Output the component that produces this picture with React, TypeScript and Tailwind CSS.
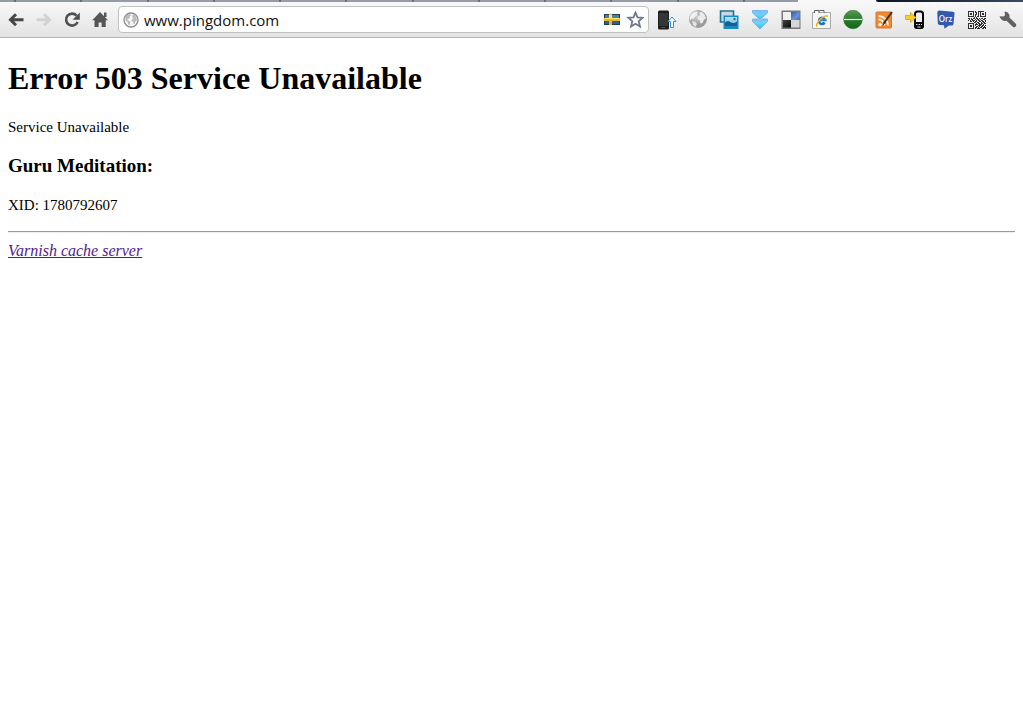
import type { ReactNode } from "react";

const TABS = Array.from({ length: 11 }, (_, i) => i);

/* 18x18 modules, one string per row */
const QR_ROWS = [
  "111111010011111100",
  "100001011010100001",
  "101101001010101101",
  "101101011010101101",
  "100001010010100001",
  "111111010110111111",
  "000000101000000000",
  "110101101101011011",
  "010110010110100110",
  "101011101011011001",
  "001101011001101101",
  "000000110110010110",
  "111111001011011011",
  "100001011101110100",
  "101101010011101101",
  "101101001101011010",
  "100001011010110111",
  "111111010111001101",
];

function Svg({ children }: { children: ReactNode }) {
  return (
    <svg width="20" height="20" viewBox="0 0 20 20" aria-hidden="true" className="shrink-0">
      {children}
    </svg>
  );
}

function BackIcon() {
  return (
    <Svg>
      <path d="M10 4.200 4.500 9.700l5.500 5.500M5 9.700h12.500" fill="none" stroke="#474747" strokeWidth="3" />
    </Svg>
  );
}

function ForwardIcon() {
  return (
    <Svg>
      <path d="M10 4.200 15.500 9.700 10 15.200M15 9.700H2.500" fill="none" stroke="#d2d2d2" strokeWidth="3" />
    </Svg>
  );
}

function ReloadIcon() {
  return (
    <Svg>
      <path d="M14.600 5.600A6 6 0 1 0 15.600 12" fill="none" stroke="#505050" strokeWidth="2.600" />
      <path d="M17.800 2.500v7.200h-7.200z" fill="#505050" />
    </Svg>
  );
}

function HomeIcon() {
  return (
    <Svg>
      <path d="M14 2.500h2.500V7H14z" fill="#555" />
      <path d="M10 2 2.200 10.300h2.300V17H8.600v-4.500h3V17h4.100v-6.700h2.300z" fill="#555" />
    </Svg>
  );
}

function SiteGlobeIcon() {
  return (
    <svg width="16" height="16" viewBox="0 0 16 16" aria-hidden="true" className="shrink-0">
      <circle cx="8" cy="8" r="7" fill="#f7f7f7" stroke="#8b8b8b" strokeWidth="1.300" />
      <path d="m2.500 4.700 2-2 2.500-.5 1 1.300-1.500 1.200.5 1.300-2 .8-.8 1.300 2 .8 1.300 1.200-.8 1.500.2 2-1.700-1.200-.7-2.600-2-1.600z" fill="#b9b9b9" />
      <path d="m9.500 2.300 2.700 1.200 1.400 2.200.2 3-1.500 1-.5 2-1.300.6-.3-2.200-1.700-.8.3-1.800 1.500-.9-1.100-1.300z" fill="#bdbdbd" />
    </svg>
  );
}

function SwedenFlag() {
  return (
    <svg width="16" height="11" viewBox="0 0 16 11" aria-hidden="true" className="shrink-0">
      <path d="M0 0h16v11H0z" fill="#1d3c60" />
      <path d="M1 1h14v9H1z" fill="#2f6090" />
      <path d="M1 1h14v3H1z" fill="#4b7fab" />
      <path d="M5 0h3v11H5zM0 4h16v3H0z" fill="#e5b92c" />
      <path d="M5 1h3v3H5zM1 4h14v1H1z" fill="#ffe36a" />
    </svg>
  );
}

function StarIcon() {
  return (
    <svg width="18" height="18" viewBox="0 0 18 18" aria-hidden="true" className="shrink-0">
      <path
        d="m9.500 1.500 2 4.900 5.200.4-4 3.500 1.300 5.200-4.500-2.800L5 15.500l1.300-5.200-4-3.500 5.200-.4z"
        fill="#fff"
        stroke="#6f7890"
        strokeWidth="1.800"
      />
    </svg>
  );
}

function PhoneUploadIcon() {
  return (
    <Svg>
      <rect x="1" y="0.500" width="11" height="19" rx="1.500" fill="#1d1d1d" />
      <path d="M2 3h9v13H2z" fill="#343638" />
      <path d="M4.500 17.500h4" stroke="#555" />
      <path d="m15 7 4 4.500h-2.500v6h-3v-6H11z" fill="#fff" stroke="#1c94e8" strokeLinejoin="round" />
    </Svg>
  );
}

function GreyGlobeIcon() {
  return (
    <Svg>
      <defs>
        <radialGradient id="globe" cx="40%" cy="35%">
          <stop offset="0" stopColor="#d0d0d0" />
          <stop offset="1" stopColor="#9b9b9b" />
        </radialGradient>
      </defs>
      <circle cx="10" cy="9" r="9" fill="url(#globe)" />
      <path d="m2.500 5 2.500-2.500 3-1 2 .5-1.500 2 1 1.500-2.500 1L5.500 9l-2-.5-1 2-1-2z" fill="#f0f0f0" />
      <path d="m11 2.500 3-.5 2.500 2.500 1.500 4-2 1-1.500 3.500-2 .5-1-3.500-2-.5.500-3 2.500-1.500z" fill="#ebebeb" />
      <path d="m4 11 3.500 1 1.500 2-1.500 3L5 15z" fill="#e4e4e4" />
    </Svg>
  );
}

function PicturesIcon() {
  return (
    <Svg>
      <defs>
        <linearGradient id="photo" x1="0" y1="0" x2="0" y2="1">
          <stop offset="0" stopColor="#b7e2f5" />
          <stop offset="1" stopColor="#60b8e6" />
        </linearGradient>
      </defs>
      <path d="M1.500 1h13v11h-13z" fill="#c9d9e0" stroke="#286d92" strokeWidth="1.600" />
      <path d="M4.500 5.500h15v13.500h-15z" fill="#168ace" />
      <path d="M6 7h12v9.500H6z" fill="url(#photo)" />
      <path d="M6 12.500q3-3 6 0 3 1.500 6-1v5H6z" fill="#14618f" />
      <circle cx="15.500" cy="9" r="1.200" fill="#24719b" />
    </Svg>
  );
}

function DoubleDownIcon() {
  return (
    <Svg>
      <defs>
        <linearGradient id="chevron" x1="0" y1="0" x2="0" y2="1">
          <stop offset="0" stopColor="#8bb8f2" />
          <stop offset=".4" stopColor="#6bd3fa" />
          <stop offset="1" stopColor="#18c9f7" />
        </linearGradient>
      </defs>
      <path d="M2.500.5h15v2.500L10 9.500 2.500 3z" fill="url(#chevron)" stroke="#6cabe8" strokeWidth=".8" />
      <path d="M2.500 9h5l2.500 1.500L12.500 9h5v2.500l-7.500 7.500-7.500-7.500z" fill="url(#chevron)" stroke="#6cabe8" strokeWidth=".8" />
    </Svg>
  );
}

function DeliciousIcon() {
  return (
    <Svg>
      <defs>
        <linearGradient id="blueTile" x1="0" y1="0" x2="1" y2="1">
          <stop offset="0" stopColor="#2c5ca8" />
          <stop offset=".6" stopColor="#6b94d3" />
          <stop offset="1" stopColor="#3f6ebc" />
        </linearGradient>
        <linearGradient id="blackTile" x1="0" y1="0" x2="1" y2="1">
          <stop offset="0" stopColor="#444" />
          <stop offset="1" stopColor="#080808" />
        </linearGradient>
      </defs>
      <path d="M.5.500h19v18.500H.5z" fill="#777" />
      <path d="M2 2h8v8H2z" fill="#f1f1f1" />
      <path d="M10 2h8.500v8H10z" fill="url(#blueTile)" />
      <path d="M2 10h8v7.500H2z" fill="url(#blackTile)" />
      <path d="M10 10h8.500v7.500H10z" fill="#d6d6d6" />
    </Svg>
  );
}

function IeTabIcon() {
  return (
    <Svg>
      <path d="M.5 2.500h18v16H.5z" fill="#f5f5f5" stroke="#a9a9a9" />
      <path d="M2.500 3V.5h4.500V3M7.500.5H12V3" fill="#f5f5f5" stroke="#5c5c5c" />
      <path d="M12.600 12.500a3 3 0 1 1 .3-2.500H7.500" fill="none" stroke="#1d72c2" strokeWidth="2.600" />
      <path d="M7 9.800h7.500" stroke="#2e93df" strokeWidth="1.600" />
      <path d="M5 16.500c-1.500-.6.500-5 4.500-8.200 3.200-2.500 6-3.600 6-1.300" fill="none" stroke="#edb51b" strokeWidth="1.500" />
    </Svg>
  );
}

function GreenBallIcon() {
  return (
    <Svg>
      <defs>
        <linearGradient id="ball" x1="0" y1="0" x2="0" y2="1">
          <stop offset="0" stopColor="#559a52" />
          <stop offset=".5" stopColor="#297a2c" />
          <stop offset="1" stopColor="#106916" />
        </linearGradient>
      </defs>
      <circle cx="10" cy="9.500" r="9.300" fill="url(#ball)" stroke="#2b702d" strokeWidth=".6" />
      <path d="M1 9.500h18" stroke="#e5f2e5" strokeWidth="1.200" />
    </Svg>
  );
}

function RssPenIcon() {
  return (
    <Svg>
      <rect x="2" y="2" width="15.500" height="16" rx="1" fill="#ef8831" stroke="#d9742a" />
      <circle cx="6" cy="14.500" r="1.700" fill="#fff" />
      <path d="M4.500 9.500a6 6 0 0 1 6 6M4.500 6a9.500 9.500 0 0 1 9.500 9.500" fill="none" stroke="#fff0df" strokeWidth="1.800" />
      <path d="m18 2-8 11" stroke="#333" strokeWidth="2" />
      <path d="m10 11 2 1.500L8.500 16z" fill="#292929" />
    </Svg>
  );
}

function SendToPhoneIcon() {
  return (
    <Svg>
      <rect x="10" y="1.500" width="8" height="16.500" rx="2.500" fill="#eee" stroke="#080808" strokeWidth="2" />
      <path d="M9 12h10v5l-2 2h-6l-2-2z" fill="#080808" />
      <path d="M11 14.500h1.500m1 0h1.500m1 0h1M12.500 17h3" stroke="#ddd" />
      <path d="M.5 5.500h5v-3l5.500 5-5.500 5v-3h-5z" fill="#f8d11f" stroke="#c9a11d" strokeWidth=".8" />
    </Svg>
  );
}

function OrzIcon() {
  return (
    <Svg>
      <path d="M3.200.6 16.800 1.700q1.900.2 1.700 2L17.500 14q-.3 1.700-2 1.600l-2.500-.2-4.500 3.400-.5-3.500-4.500-.4q-1.700-.2-1.700-1.900L1.300 2.500Q1.400.6 3.200.6z" fill="#3159ad" />
      <text x="9.500" y="11.500" textAnchor="middle" fontFamily="Noto Sans, sans-serif" fontSize="8" fontWeight="500" fill="#fff">
        Orz
      </text>
    </Svg>
  );
}

function QrIcon() {
  return (
    <Svg>
      <g shapeRendering="crispEdges" fill="#303030">
        {QR_ROWS.map((row, y) =>
          row.split("").map((cell, x) => cell === "1" && <rect key={`${x}-${y}`} x={x + 1} y={y + 1} width="1" height="1" />),
        )}
      </g>
    </Svg>
  );
}

function WrenchIcon() {
  return (
    <Svg>
      <path
        d="M1.500 6.200 5.600 6.500 7 5.200 6.600 1.600q3.400.2 4.600 3 .6 1.500.2 3l6.200 6q1.500 1.600.2 3-1.500 1.400-3 .1L8.500 10.800Q3.500 11.800 1.500 6.200z"
        fill="#606060"
      />
    </Svg>
  );
}

const NAV = [
  { label: "Back", icon: <BackIcon /> },
  { label: "Forward", icon: <ForwardIcon />, disabled: true },
  { label: "Reload", icon: <ReloadIcon /> },
  { label: "Home", icon: <HomeIcon /> },
];

const EXTENSIONS = [
  { label: "Send to device", icon: <PhoneUploadIcon /> },
  { label: "Globe", icon: <GreyGlobeIcon /> },
  { label: "Pictures", icon: <PicturesIcon /> },
  { label: "Downloads", icon: <DoubleDownIcon /> },
  { label: "Bookmarks", icon: <DeliciousIcon /> },
  { label: "IE Tab", icon: <IeTabIcon /> },
  { label: "Status", icon: <GreenBallIcon /> },
  { label: "Feeds", icon: <RssPenIcon /> },
  { label: "Send to phone", icon: <SendToPhoneIcon /> },
  { label: "Orz", icon: <OrzIcon /> },
  { label: "QR code", icon: <QrIcon /> },
  { label: "Settings", icon: <WrenchIcon /> },
];

function TabStrip() {
  return (
    <div className="flex h-0.5 bg-[#f8f8f8]">
      <div className="flex w-[78%] bg-[#959ca8]">
        <span className="w-4 border-r-2 border-[#686e79]" />
        {TABS.map((t) => (
          <span key={t} className="flex-1 border-r-2 border-[#686e79]" />
        ))}
        <span className="w-[53px]" />
      </div>
      <span className="flex-1" />
      <div className="w-[147px] rounded-bl-sm bg-linear-to-r from-[#0d1422] to-[#3c4b60]" />
    </div>
  );
}

function Toolbar() {
  return (
    <div className="flex h-9 items-center border-b border-[#b5b5b8] bg-linear-to-b from-[#f8f8f8] to-[#e3e3e3]">
      <nav className="flex pl-0.5">
        {NAV.map((n) => (
          <button key={n.label} aria-label={n.label} disabled={n.disabled} className="flex h-7 w-7 items-center justify-center">
            {n.icon}
          </button>
        ))}
      </nav>
      <div className="mr-0.5 ml-1 flex h-[27px] min-w-0 flex-1 items-center rounded border border-[#bfc0c2] bg-white px-1">
        <SiteGlobeIcon />
        <input
          aria-label="Address"
          defaultValue="www.pingdom.com"
          className="ml-[5px] min-w-0 flex-1 bg-transparent font-['Open_Sans','Noto_Sans',sans-serif] text-[15px] leading-6 text-[#111] outline-none"
        />
        <SwedenFlag />
        <button aria-label="Bookmark this page" className="ml-1.5">
          <StarIcon />
        </button>
      </div>
      <div className="flex">
        {EXTENSIONS.map((e) => (
          <button key={e.label} aria-label={e.label} className="flex h-7 w-[31px] items-center justify-center">
            {e.icon}
          </button>
        ))}
      </div>
    </div>
  );
}

export default function App() {
  return (
    <div className="min-h-screen bg-white">
      <header>
        <TabStrip />
        <Toolbar />
      </header>
      <main className="px-2 pt-[22px] font-['Liberation_Serif','Times_New_Roman',serif] text-black">
        <h1 className="text-[32px] leading-[37px] font-bold">Error 503 Service Unavailable</h1>
        <p className="mt-5 text-[15px] leading-5">Service Unavailable</p>
        <h3 className="mt-[18px] text-[19px] leading-[22px] font-bold">Guru Meditation:</h3>
        <p className="mt-[18px] text-[15px] leading-5">XID: 1780792607</p>
        <hr className="mt-4 h-0.5 border-t border-b border-t-[#9a9a9a] border-b-[#eee]" />
        <address className="mt-2 text-base leading-5">
          <a href="http://www.varnish-cache.org/" className="text-[#551a8b] underline">
            Varnish cache server
          </a>
        </address>
      </main>
    </div>
  );
}
